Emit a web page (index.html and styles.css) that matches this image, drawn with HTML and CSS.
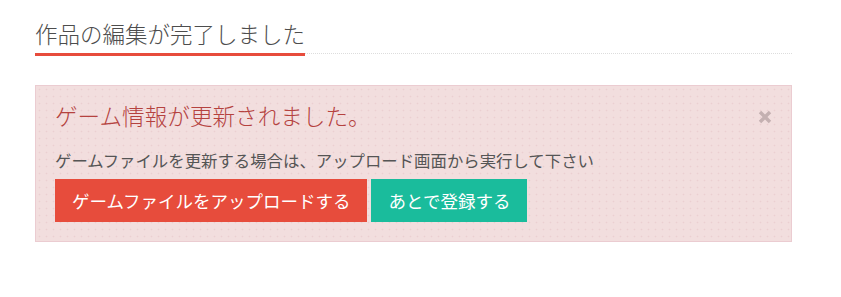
FILE: index.html
```html
<!DOCTYPE html>
<html lang="ja">
<head>
    <meta charset="UTF-8">
    <title>作品の編集が完了しました</title>
    <link rel="stylesheet" href="styles.css">
</head>
<body>
    <div class="content">
        <h2 class="page-title"><span>作品の編集が完了しました</span></h2>

        <div class="alert">
            <button class="close" type="button" aria-label="閉じる">
                <svg width="14" height="14" viewBox="0 0 14 14">
                    <path d="M2 2 L12 12 M12 2 L2 12" stroke="currentColor" stroke-width="3.4" stroke-linecap="butt"/>
                </svg>
            </button>
            <h3 class="alert-title">ゲーム情報が更新されました。</h3>
            <p class="alert-text">ゲームファイルを更新する場合は、アップロード画面から実行して下さい</p>
            <div class="actions">
                <a class="btn btn-upload" href="#">ゲームファイルをアップロードする</a>
                <a class="btn btn-later" href="#">あとで登録する</a>
            </div>
        </div>
    </div>
</body>
</html>
```

FILE: styles.css
```css
body {
    margin: 0;
    font-family: "Noto Sans CJK JP", "Noto Sans", sans-serif;
    background: #ffffff;
    color: #555555;
}

.content {
    width: 757px;
    padding: 0 0 0 35px;
}

.page-title {
    display: flex;
    margin: 15px 0 31px;
    font-size: 22.5px;
    font-weight: 300;
    line-height: 36px;
    color: #4d4d4d;
    border-bottom: 1px dotted #dddddd;
}

.page-title span {
    border-bottom: 3px solid #e74c3c;
    margin-bottom: -3px;
    padding-bottom: 2px;
}

.alert {
    position: relative;
    background-color: #f2dede;
    background-image: radial-gradient(circle, #ebcfd1 0.7px, transparent 1.1px);
    background-size: 7px 7px;
    border: 1px solid #ebccd1;
    padding: 14px 19px 19px;
}

.close {
    position: absolute;
    top: 24px;
    right: 19px;
    padding: 0;
    border: none;
    background: none;
    color: #c4b0b1;
    cursor: pointer;
}

.close svg {
    display: block;
}

.alert-title {
    margin: 0 0 16px;
    font-size: 22.6px;
    font-weight: 300;
    line-height: 32px;
    color: #b5423f;
}

.alert-text {
    margin: 0 0 7px;
    font-size: 16.4px;
    line-height: 24px;
    color: #555555;
}

.actions {
    display: flex;
    gap: 4px;
}

.btn {
    display: block;
    padding: 0 17px;
    height: 43px;
    line-height: 43px;
    font-size: 17.5px;
    color: #ffffff;
    text-decoration: none;
}

.btn-upload {
    background: #e74c3c;
}

.btn-later {
    background: #1abc9c;
}
```
